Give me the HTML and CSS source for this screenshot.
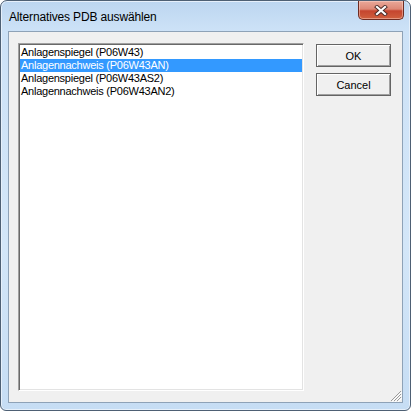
FILE: index.html
```html
<!DOCTYPE html>
<html>
<head>
<meta charset="utf-8">
<link rel="stylesheet" href="styles.css">
</head>
<body>
<div class="window">
  <div class="titlebar">
    <span class="title">Alternatives PDB auswählen</span>
    <div class="close">
      <svg width="14" height="11" viewBox="0 0 14 11">
        <path d="M3 2 L11 9 M11 2 L3 9" stroke="#4a2a26" stroke-width="4" stroke-linecap="square" fill="none"/>
        <path d="M3 2 L11 9 M11 2 L3 9" stroke="#ffffff" stroke-width="2.2" stroke-linecap="square" fill="none"/>
      </svg>
    </div>
  </div>
  <div class="client">
    <div class="list">
      <div class="row">Anlagenspiegel (P06W43)</div>
      <div class="row selected">Anlagennachweis (P06W43AN)</div>
      <div class="row">Anlagenspiegel (P06W43AS2)</div>
      <div class="row">Anlagennachweis (P06W43AN2)</div>
    </div>
    <div class="buttons">
      <button class="btn">OK</button>
      <button class="btn">Cancel</button>
    </div>
    <svg class="grip" width="13" height="13" viewBox="0 0 13 13">
      <path d="M12 2 L2 12 M12 5 L5 12 M12 8 L8 12" stroke="#9a9a9a" stroke-width="1" fill="none"/>
      <path d="M13 3 L3 13 M13 6 L6 13 M13 9 L9 13" stroke="#ffffff" stroke-width="1" fill="none"/>
    </svg>
  </div>
</div>
</body>
</html>
```

FILE: styles.css
```css
html, body {
  margin: 0;
  padding: 0;
  background: #ffffff;
}

.window {
  width: 411px;
  height: 411px;
  box-sizing: border-box;
  border: 1px solid #4e6074;
  border-radius: 7px 7px 6px 6px;
  background: linear-gradient(to bottom, #bcd6f0 0px, #cde2f7 30px, #d3e6f8 60%, #c6ddf4 100%);
  padding: 0 7px 7px 7px;
  display: flex;
  flex-direction: column;
  box-shadow: inset 0 0 0 1px #e6f0fb;
}

.titlebar {
  height: 30px;
  display: flex;
  align-items: flex-start;
  justify-content: space-between;
  position: relative;
}

.title {
  font-family: "Liberation Sans", Arial, sans-serif;
  font-size: 12px;
  color: #000000;
  margin-top: 9px;
  margin-left: 1px;
  letter-spacing: -0.15px;
}

.close {
  width: 44px;
  height: 18px;
  margin-right: -1px;
  border: 1px solid #6e2c22;
  border-top: none;
  border-radius: 0 0 5px 5px;
  background: linear-gradient(to bottom, #e9a899 0%, #dd8876 45%, #c5452f 55%, #d0603e 100%);
  display: flex;
  align-items: center;
  justify-content: center;
  box-shadow: inset 0 0 0 1px rgba(255, 220, 210, 0.45);
}

.client {
  flex: 1;
  border: 1px solid #8ea2b7;
  background: #f0f0f0;
  padding: 11px 0 0 9px;
  display: flex;
  align-items: flex-start;
  gap: 12px;
  position: relative;
}

.list {
  width: 286px;
  height: 348px;
  box-sizing: border-box;
  background: #ffffff;
  border-top: 1px solid #a0a0a0;
  border-left: 1px solid #a0a0a0;
  border-right: 1px solid #ffffff;
  border-bottom: 1px solid #ffffff;
  box-shadow: inset 1px 1px 0 #696969, inset -1px -1px 0 #e3e3e3;
  padding: 2px 1px;
  font-family: "Liberation Sans", Arial, sans-serif;
  font-size: 11px;
  letter-spacing: -0.25px;
  color: #000000;
}

.row {
  height: 13px;
  line-height: 13px;
  padding-left: 1px;
  white-space: nowrap;
}

.row.selected {
  background: #3399ff;
  color: #ffffff;
}

.buttons {
  display: flex;
  flex-direction: column;
  gap: 6px;
  margin-top: 1px;
}

.btn {
  width: 75px;
  height: 23px;
  box-sizing: border-box;
  margin: 0;
  padding: 0;
  border: 1px solid #646464;
  background: #f0f0f0;
  box-shadow: inset 1px 1px 0 #ffffff, inset -1px -1px 0 #a0a0a0;
  font-family: "Liberation Sans", Arial, sans-serif;
  font-size: 11px;
  color: #000000;
}

.grip {
  position: absolute;
  right: 0;
  bottom: 0;
}
```
